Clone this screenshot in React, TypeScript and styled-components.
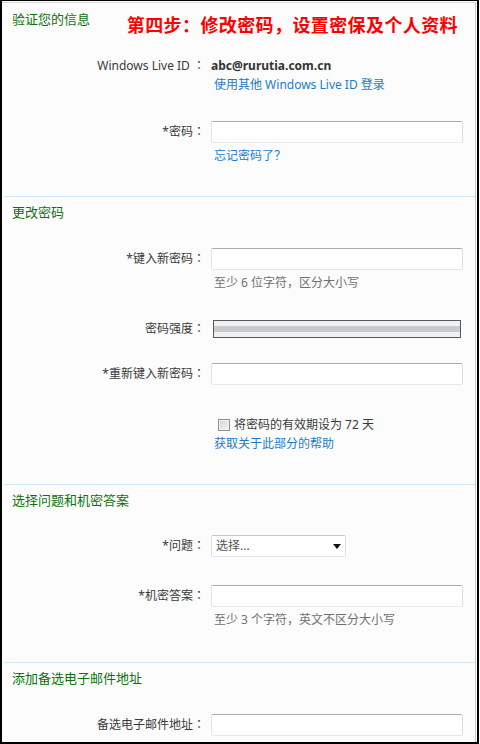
import React from "react";
import styled, { createGlobalStyle } from "styled-components";

const Global = createGlobalStyle`
  html, body { margin: 0; padding: 0; background: #fff; }
  body { font-family: "Noto Sans", "Noto Sans CJK SC", sans-serif; font-size: 12px; color: #333; }
  * { box-sizing: border-box; }
`;

const Frame = styled.div`
  width: 479px;
  height: 744px;
  border-top: 1px solid #000;
  border-left: 2px solid #000;
  border-right: 2px solid #000;
  border-bottom: 2px solid #000;
  display: flex;
  flex-direction: column;
  background: #fff;
`;

const Panel = styled.div`
  flex: 1;
  width: 474px;
  margin-top: 1px;
  border-top: 1px solid #d9d9d9;
  border-right: 1px solid #cacaca;
  background: #fcfcfd;
`;

const Section = styled.section<{ $first?: boolean; $pb?: number }>`
  margin-left: 2px;
  border-top: ${(p) => (p.$first ? "none" : "1px solid #d3e8f5")};
  padding-bottom: ${(p) => p.$pb ?? 0}px;
`;

const Header = styled.div`
  display: flex;
  align-items: flex-start;
  margin-top: 7px;
`;

const Heading = styled.h2<{ $mt?: number }>`
  margin: ${(p) => p.$mt ?? 0}px 0 0 0;
  padding-left: 8px;
  font-size: 13px;
  line-height: 18px;
  font-weight: normal;
  color: #0c730c;
`;

const StepTitle = styled.div`
  margin: 2px 17px 0 auto;
  font-family: "Noto Sans CJK SC", sans-serif;
  font-size: 18px;
  letter-spacing: 0.4px;
  line-height: 24px;
  font-weight: bold;
  color: #ff0000;
`;

const Row = styled.div<{ $mt: number }>`
  display: grid;
  grid-template-columns: 201px 1fr;
  column-gap: 6px;
  align-items: center;
  margin-top: ${(p) => p.$mt}px;
`;

const Label = styled.label<{ $lh?: number }>`
  display: block;
  height: ${(p) => p.$lh ?? 18}px;
  text-align: right;
  line-height: ${(p) => p.$lh ?? 18}px;
  color: #3a3a3a;
  white-space: nowrap;
`;

const Colon = styled.span`
  font-family: "Noto Sans CJK TC", sans-serif;
  line-height: 0;
`;

const Value = styled.div`
  font-weight: bold;
  line-height: 19px;
  color: #333;
`;

const TextBox = styled.div<{ $w?: number }>`
  width: ${(p) => p.$w ?? 252}px;
  height: 22px;
  background: #fff;
  border: 1px solid;
  border-color: #abadb3 #dbdfe6 #e3e9ef #e2e3ea;
  border-radius: 2px;
`;

const SelectBox = styled.div`
  width: 135px;
  height: 22px;
  background: #fff;
  border: 1px solid;
  border-color: #c5c7cc #dcdfe5 #e3e7ec #dcdfe5;
  border-radius: 2px;
  display: flex;
  align-items: center;
  justify-content: space-between;
  padding: 0 4px 0 4px;
  color: #555;
  line-height: 18px;
`;

const Strength = styled.div`
  margin-left: 2px;
  width: 248px;
  height: 18px;
  border: 1px solid #595959;
  background: #f0f0f0;
  display: flex;
  flex-direction: column;
  justify-content: center;
`;

const StrengthStripe = styled.div`
  height: 6px;
  background: #c9cccf;
`;

const Note = styled.div<{ $mt?: number; $lh?: number; $link?: boolean }>`
  margin-top: ${(p) => p.$mt ?? 0}px;
  padding-left: 210px;
  line-height: ${(p) => p.$lh ?? 18}px;
  color: ${(p) => (p.$link ? "#1b7ad0" : "#707070")};
  white-space: nowrap;
`;

const CheckLine = styled.div<{ $mt: number }>`
  margin-top: ${(p) => p.$mt}px;
  padding-left: 214px;
  display: flex;
  align-items: center;
  line-height: 19px;
  color: #3a3a3a;
`;

const CheckBox = styled.span`
  width: 12px;
  height: 12px;
  border: 1px solid #8e8f8f;
  background: linear-gradient(135deg, #d4d4d4 0%, #f4f4f4 100%);
  box-shadow: inset 0 0 0 1px #f2f2f2;
  margin-right: 4px;
  flex: none;
`;

const L = ({ text, lh }: { text: string; lh?: number }) => (
  <Label $lh={lh}>
    {text}
    <Colon>：</Colon>
  </Label>
);

export default function App() {
  return (
    <>
      <Global />
      <Frame>
        <Panel>
          <Section $first $pb={31}>
            <Header>
              <Heading>验证您的信息</Heading>
              <StepTitle>第四步：修改密码，设置密保及个人资料</StepTitle>
            </Header>
            <Row $mt={20}>
              <L text="Windows Live ID " lh={19} />
              <Value>abc@rurutia.com.cn</Value>
            </Row>
            <Note $lh={19} $link>使用其他 Windows Live ID 登录</Note>
            <Row $mt={27}>
              <L text="*密码" />
              <TextBox />
            </Row>
            <Note $mt={4} $link>忘记密码了？</Note>
          </Section>

          <Section $pb={31}>
            <Heading $mt={6}>更改密码</Heading>
            <Row $mt={27}>
              <L text="*键入新密码" />
              <TextBox />
            </Row>
            <Note $mt={4}>至少 6 位字符，区分大小写</Note>
            <Row $mt={28}>
              <L text="密码强度" />
              <Strength>
                <StrengthStripe />
              </Strength>
            </Row>
            <Row $mt={25}>
              <L text="*重新键入新密码" />
              <TextBox />
            </Row>
            <CheckLine $mt={30}>
              <CheckBox />
              将密码的有效期设为 72 天
            </CheckLine>
            <Note $lh={19} $link>获取关于此部分的帮助</Note>
          </Section>

          <Section $pb={33}>
            <Heading $mt={6}>选择问题和机密答案</Heading>
            <Row $mt={26}>
              <L text="*问题" />
              <SelectBox>
                <span>选择...</span>
                <svg width="8" height="5" viewBox="0 0 8 5">
                  <path d="M0 0 H8 L4 5 Z" fill="#111" />
                </svg>
              </SelectBox>
            </Row>
            <Row $mt={28}>
              <L text="*机密答案" />
              <TextBox />
            </Row>
            <Note $mt={4}>至少 3 个字符，英文不区分大小写</Note>
          </Section>

          <Section>
            <Heading $mt={6}>添加备选电子邮件地址</Heading>
            <Row $mt={27}>
              <L text="备选电子邮件地址" />
              <TextBox />
            </Row>
          </Section>
        </Panel>
      </Frame>
    </>
  );
}
